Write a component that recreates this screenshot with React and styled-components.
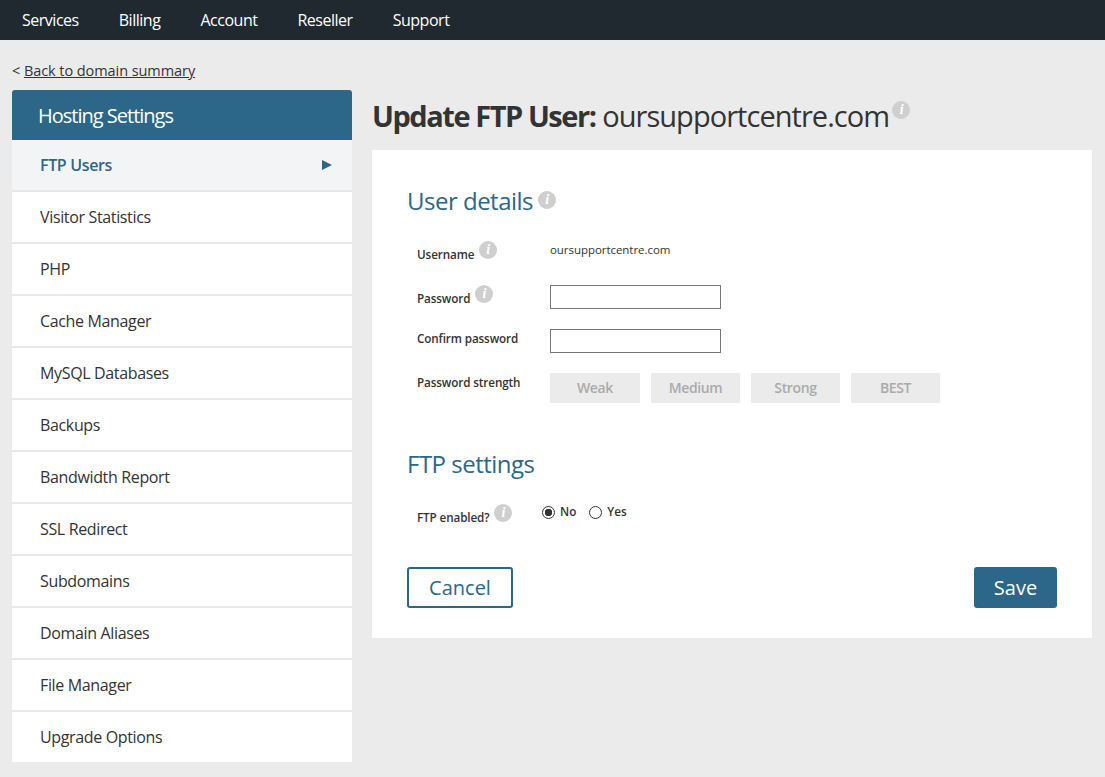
import React from 'react'
import styled, { createGlobalStyle } from 'styled-components'

const Blue = '#2c6789'
const Ink = '#333333'

const GlobalStyle = createGlobalStyle`
	html, body {
		margin: 0;
		padding: 0;
		background: #ebebeb;
		font-family: "Open Sans", "Liberation Sans", sans-serif;
		color: ${Ink};
	}
	* {
		box-sizing: border-box;
	}
`

const Page = styled.div`
	height: 777px;
	overflow: hidden;
`
const TopNav = styled.nav`
	display: flex;
	align-items: center;
	gap: 40px;
	height: 40px;
	padding-left: 22px;
	background: #20292f;
`
const NavLink = styled.a`
	font-size: 16px;
	letter-spacing: -0.48px;
	color: #ffffff;
`
const Content = styled.div`
	padding: 21px 13px 0 12px;
`
const BackRow = styled.div`
	height: 29px;
	font-size: 14.5px;
	line-height: 20px;
	letter-spacing: -0.07px;
	a {
		color: ${Ink};
		text-decoration: underline;
	}
`
const Columns = styled.div`
	display: flex;
	gap: 20px;
`
const Sidebar = styled.aside`
	flex: 0 0 340px;
`
const SideTitle = styled.h2`
	margin: 0;
	height: 50px;
	padding: 1px 0 0 26px;
	border-radius: 3px 3px 0 0;
	background: ${Blue};
	color: #ffffff;
	font-size: 20px;
	font-weight: 400;
	line-height: 50px;
	letter-spacing: -1px;
`
const SideItem = styled.a`
	display: flex;
	align-items: center;
	justify-content: space-between;
	height: ${props => props.$last ? 50 : 52}px;
	padding: 0 20px 0 28px;
	border-bottom: ${props => props.$last ? 'none' : '2px solid #e8e8e8'};
	background: ${props => props.$active ? '#f3f4f6' : '#ffffff'};
	color: ${props => props.$active ? Blue : Ink};
	font-size: 16px;
	font-weight: ${props => props.$active ? 600 : 400};
	letter-spacing: -0.35px;
`
const Arrow = styled.span`
	width: 0;
	height: 0;
	border-top: 5.5px solid transparent;
	border-bottom: 5.5px solid transparent;
	border-left: 10px solid ${Blue};
`
const Main = styled.main`
	flex: 1;
`
const PageTitle = styled.h1`
	display: flex;
	height: 60px;
	margin: 0;
	padding: 7px 0 0 0;
	font-size: 29px;
	font-weight: 400;
	line-height: 38px;
	letter-spacing: -0.95px;
	white-space: pre;
	b {
		font-weight: 700;
		letter-spacing: -1.45px;
	}
`
const Card = styled.section`
	height: 488px;
	padding: 35px 35px 30px;
	background: #ffffff;
	display: flex;
	flex-direction: column;
`
const SectionTitle = styled.h3`
	display: flex;
	margin: 0;
	height: 32px;
	color: ${Blue};
	font-size: 24px;
	font-weight: 400;
	line-height: 32px;
	letter-spacing: -0.5px;
`
const InfoDot = styled.span`
	display: inline-flex;
	align-items: center;
	justify-content: center;
	flex: none;
	width: 18px;
	height: 18px;
	margin-left: ${props => props.$gap || 8}px;
	margin-top: ${props => props.$top || 0}px;
	border-radius: 50%;
	background: #cfcfcf;
	color: #ffffff;
	font-family: "Liberation Serif", serif;
	font-size: 14px;
	font-style: italic;
	font-weight: 700;
	line-height: 18px;
`
const Rows = styled.div`
	margin-top: 24px;
`
const Row = styled.div`
	display: flex;
	height: 44px;
`
const LabelCell = styled.div`
	display: flex;
	flex: 0 0 143px;
	padding-left: 10px;
`
const Label = styled.label`
	padding-top: ${props => props.$shift ? 5 : 1}px;
	font-size: 11.7px;
	font-weight: 600;
	line-height: 16px;
	letter-spacing: -0.12px;
`
const Value = styled.div`
	font-size: 11.5px;
	line-height: 18px;
	letter-spacing: -0.05px;
`
const TextInput = styled.input`
	width: 171px;
	height: 24px;
	padding: 0 4px;
	border: 1px solid #767676;
	background: #ffffff;
`
const StrengthList = styled.div`
	display: flex;
	gap: 11px;
`
const StrengthBox = styled.div`
	width: ${props => props.$wide ? 90 : 89}px;
	height: 30px;
	background: #ebebeb;
	color: #aaaaaa;
	font-size: 14px;
	font-weight: 600;
	line-height: 30px;
	text-align: center;
	letter-spacing: -0.35px;
`
const FtpTitle = styled(SectionTitle)`
	margin-top: 31px;
`
const RadioRow = styled(Row)`
	margin-top: 24px;
	height: 63px;
`
const RadioCell = styled(LabelCell)`
	flex-basis: 135px;
`
const RadioLabel = styled.label`
	display: flex;
	align-items: flex-start;
	height: 18px;
	margin-right: 13px;
	font-size: 11.7px;
	font-weight: 600;
	line-height: 15px;
`
const Radio = styled.input`
	appearance: none;
	width: 13px;
	height: 13px;
	margin: 2px 5px 0 0;
	border: 1px solid #333333;
	border-radius: 50%;
	background: #ffffff;
	&:checked {
		background: radial-gradient(circle, #333333 0 3.5px, #ffffff 4px);
	}
`
const Actions = styled.div`
	display: flex;
	justify-content: space-between;
`
const Button = styled.button`
	height: 41px;
	padding: 0;
	width: ${props => props.$primary ? 83 : 106}px;
	border: 2px solid ${Blue};
	border-radius: 3px;
	background: ${props => props.$primary ? Blue : '#ffffff'};
	color: ${props => props.$primary ? '#ffffff' : Blue};
	font-family: inherit;
	font-size: 20px;
	line-height: 1;
`

const MENU = [
	'FTP Users',
	'Visitor Statistics',
	'PHP',
	'Cache Manager',
	'MySQL Databases',
	'Backups',
	'Bandwidth Report',
	'SSL Redirect',
	'Subdomains',
	'Domain Aliases',
	'File Manager',
	'Upgrade Options',
]

const App = () => (
	<Page>
		<GlobalStyle />
		<TopNav>
			{['Services', 'Billing', 'Account', 'Reseller', 'Support'].map(item => <NavLink key={item}>{item}</NavLink>)}
		</TopNav>
		<Content>
			<BackRow>&lt; <a href="#back">Back to domain summary</a></BackRow>
			<Columns>
				<Sidebar>
					<SideTitle>Hosting Settings</SideTitle>
					{MENU.map((item, key) => (
						<SideItem key={item} $active={key === 0} $last={key === MENU.length - 1}>
							{item}
							{key === 0 && <Arrow />}
						</SideItem>
					))}
				</Sidebar>
				<Main>
					<PageTitle><b>Update FTP User:</b> oursupportcentre.com<InfoDot $gap={3} $top={4}>i</InfoDot></PageTitle>
					<Card>
						<SectionTitle>User details<InfoDot $gap={5} $top={6}>i</InfoDot></SectionTitle>
						<Rows>
							<Row>
								<LabelCell><Label $shift>Username</Label><InfoDot $gap={5}>i</InfoDot></LabelCell>
								<Value>oursupportcentre.com</Value>
							</Row>
							<Row>
								<LabelCell><Label $shift>Password</Label><InfoDot $gap={5}>i</InfoDot></LabelCell>
								<TextInput type="password" />
							</Row>
							<Row>
								<LabelCell><Label>Confirm password</Label></LabelCell>
								<TextInput type="password" />
							</Row>
							<Row>
								<LabelCell><Label>Password strength</Label></LabelCell>
								<StrengthList>
									<StrengthBox $wide>Weak</StrengthBox>
									<StrengthBox>Medium</StrengthBox>
									<StrengthBox>Strong</StrengthBox>
									<StrengthBox>BEST</StrengthBox>
								</StrengthList>
							</Row>
						</Rows>
						<FtpTitle>FTP settings</FtpTitle>
						<RadioRow>
							<RadioCell><Label $shift>FTP enabled?</Label><InfoDot $gap={5}>i</InfoDot></RadioCell>
							<RadioLabel><Radio type="radio" name="ftp" defaultChecked />No</RadioLabel>
							<RadioLabel><Radio type="radio" name="ftp" />Yes</RadioLabel>
						</RadioRow>
						<Actions>
							<Button>Cancel</Button>
							<Button $primary>Save</Button>
						</Actions>
					</Card>
				</Main>
			</Columns>
		</Content>
	</Page>
)

export default App
